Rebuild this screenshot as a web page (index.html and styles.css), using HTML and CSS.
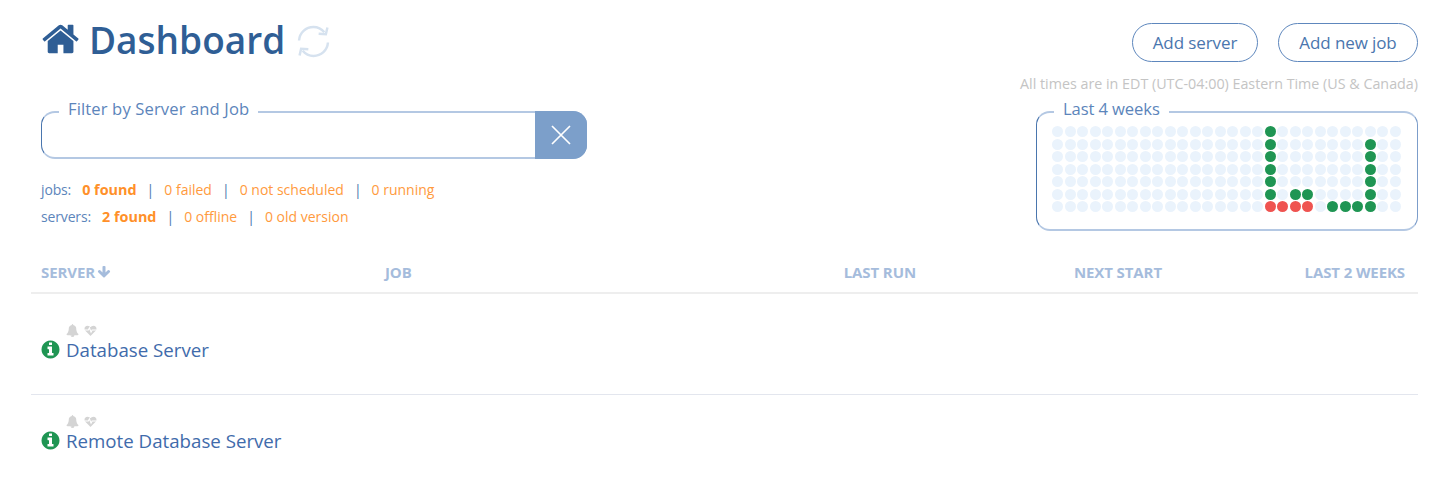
FILE: index.html
```html
<!DOCTYPE html>
<html lang="en">
<head>
<meta charset="utf-8">
<title>Dashboard</title>
<link rel="stylesheet" href="styles.css">
</head>
<body>
<main class="page">
  <header class="top">
    <h1 class="title">
      <svg class="home" viewBox="0 0 1792 1792"><path d="M1408 992v480q0 26-19 45t-45 19h-384v-384h-256v384h-384q-26 0-45-19t-19-45v-480q0-1 .5-3t.5-3l575-474 575 474q1 2 1 6zm223-69l-62 74q-8 9-21 11h-3q-13 0-21-7l-692-577-692 577q-12 8-24 7-13-2-21-11l-62-74q-8-10-7-23.5t11-21.5l719-599q32-26 76-26t76 26l244 204v-195q0-14 9-23t23-9h192q14 0 23 9t9 23v408l219 182q10 8 11 21.5t-7 23.5z"/></svg>
      <span>Dashboard</span>
      <svg class="sync" viewBox="0 0 32 32"><path d="M2 15C2.500 7.500 8.500 2 16 2c4.500 0 8 2 10.500 5M30 17c-.5 7.500-6.500 13-14 13-4.500 0-8-2-10.500-5"/><path d="M29.500 2.500L28 9l-7-.5M2.500 29.500L4 23l7 .5"/></svg>
    </h1>
    <div class="top-right">
      <div class="actions">
        <a class="pill" href="#">Add server</a>
        <a class="pill" href="#">Add new job</a>
      </div>
      <p class="tz">All times are in EDT (UTC-04:00) Eastern Time (US &amp; Canada)</p>
    </div>
  </header>

  <section class="controls">
    <div class="left-controls">
      <div class="panel filter">
        <span class="panel-label">Filter by Server and Job</span>
        <input class="filter-input" type="text" aria-label="Filter by Server and Job">
        <button class="clear" type="button" aria-label="Clear">
          <svg viewBox="0 0 20 20"><path d="M1 1l18 18M19 1L1 19"/></svg>
        </button>
      </div>
      <ul class="stats">
        <li class="stat-line"><span class="stat-name">jobs:</span><b>0 found</b><i>|</i><span>0 failed</span><i>|</i><span>0 not scheduled</span><i>|</i><span>0 running</span></li>
        <li class="stat-line"><span class="stat-name">servers:</span><b>2 found</b><i>|</i><span>0 offline</span><i>|</i><span>0 old version</span></li>
      </ul>
    </div>
    <div class="panel weeks">
      <span class="panel-label">Last 4 weeks</span>
      <div class="dots"><i></i><i></i><i></i><i></i><i></i><i></i><i></i><i></i><i></i><i></i><i></i><i></i><i></i><i></i><i></i><i></i><i></i><i class="g"></i><i></i><i></i><i></i><i></i><i></i><i></i><i></i><i></i><i></i><i></i><i></i><i></i><i></i><i></i><i></i><i></i><i></i><i></i><i></i><i></i><i></i><i></i><i></i><i></i><i></i><i></i><i></i><i class="g"></i><i></i><i></i><i></i><i></i><i></i><i></i><i></i><i class="g"></i><i></i><i></i><i></i><i></i><i></i><i></i><i></i><i></i><i></i><i></i><i></i><i></i><i></i><i></i><i></i><i></i><i></i><i></i><i></i><i class="g"></i><i></i><i></i><i></i><i></i><i></i><i></i><i></i><i class="g"></i><i></i><i></i><i></i><i></i><i></i><i></i><i></i><i></i><i></i><i></i><i></i><i></i><i></i><i></i><i></i><i></i><i></i><i></i><i></i><i class="g"></i><i></i><i></i><i></i><i></i><i></i><i></i><i></i><i class="g"></i><i></i><i></i><i></i><i></i><i></i><i></i><i></i><i></i><i></i><i></i><i></i><i></i><i></i><i></i><i></i><i></i><i></i><i></i><i></i><i class="g"></i><i></i><i></i><i></i><i></i><i></i><i></i><i></i><i class="g"></i><i></i><i></i><i></i><i></i><i></i><i></i><i></i><i></i><i></i><i></i><i></i><i></i><i></i><i></i><i></i><i></i><i></i><i></i><i></i><i class="g"></i><i></i><i class="g"></i><i class="g"></i><i></i><i></i><i></i><i></i><i class="g"></i><i></i><i></i><i></i><i></i><i></i><i></i><i></i><i></i><i></i><i></i><i></i><i></i><i></i><i></i><i></i><i></i><i></i><i></i><i></i><i class="r"></i><i class="r"></i><i class="r"></i><i class="r"></i><i></i><i class="g"></i><i class="g"></i><i class="g"></i><i class="g"></i><i></i><i></i></div>
    </div>
  </section>

  <section class="table">
    <div class="thead">
      <span class="th">SERVER <svg class="arrow" viewBox="0 0 1792 1792"><path d="M1675 832q0 53-37 90l-651 652q-39 37-91 37-53 0-90-37l-651-652q-38-36-38-90 0-53 38-91l74-75q39-37 91-37 53 0 90 37l294 294v-704q0-52 38-90t90-38h128q52 0 90 38t38 90v704l294-294q37-37 90-37 52 0 91 37l75 75q37 39 37 91z"/></svg></span>
      <span class="th">JOB</span>
      <span class="th th-end">LAST RUN</span>
      <span class="th th-end">NEXT START</span>
      <span class="th th-end">LAST 2 WEEKS</span>
    </div>
    <article class="row row-first">
      <div class="row-icons">
        <svg viewBox="0 0 1792 1792"><path d="M912 1696q0-16-16-16-59 0-101.500-42.500t-42.500-101.500q0-16-16-16t-16 16q0 73 51.500 124.500t124.500 51.500q16 0 16-16zm816-288q0 52-38 90t-90 38h-448q0 106-75 181t-181 75-181-75-75-181h-448q-52 0-90-38t-38-90q50-42 91-88t85-119.500 74.500-158.500 50-206 19.500-260q0-152 117-282.500t307-158.500q-8-19-8-39 0-40 28-68t68-28 68 28 28 68q0 20-8 39 190 28 307 158.500t117 282.500q0 139 19.500 260t50 206 74.500 158.500 85 119.500 91 88z"/></svg>
        <svg viewBox="0 0 24 24"><path d="M12 22L2.500 12.500C-.5 9 1 3 6.500 3 9 3 11 4.500 12 6c1-1.500 3-3 5.500-3C23 3 24.500 9 21.500 12.500z"/><path class="pulse" d="M1 11h7l2-4 3 8 2-4h8"/></svg>
      </div>
      <div class="server">
        <svg class="info" viewBox="0 0 1792 1792"><path d="M1152 1376v-160q0-14-9-23t-23-9h-96v-512q0-14-9-23t-23-9h-320q-14 0-23 9t-9 23v160q0 14 9 23t23 9h96v320h-96q-14 0-23 9t-9 23v160q0 14 9 23t23 9h448q14 0 23-9t9-23zm-128-896v-160q0-14-9-23t-23-9h-192q-14 0-23 9t-9 23v160q0 14 9 23t23 9h192q14 0 23-9t9-23zm640 416q0 209-103 385.500t-279.500 279.500-385.500 103-385.500-103-279.500-279.500-103-385.500 103-385.500 279.500-279.500 385.500-103 385.500 103 279.500 279.500 103 385.500z"/></svg>
        <a class="server-name" href="#">Database Server</a>
      </div>
    </article>
    <article class="row">
      <div class="row-icons">
        <svg viewBox="0 0 1792 1792"><path d="M912 1696q0-16-16-16-59 0-101.500-42.500t-42.500-101.500q0-16-16-16t-16 16q0 73 51.500 124.500t124.500 51.500q16 0 16-16zm816-288q0 52-38 90t-90 38h-448q0 106-75 181t-181 75-181-75-75-181h-448q-52 0-90-38t-38-90q50-42 91-88t85-119.500 74.500-158.500 50-206 19.500-260q0-152 117-282.500t307-158.500q-8-19-8-39 0-40 28-68t68-28 68 28 28 68q0 20-8 39 190 28 307 158.500t117 282.500q0 139 19.500 260t50 206 74.500 158.500 85 119.500 91 88z"/></svg>
        <svg viewBox="0 0 24 24"><path d="M12 22L2.500 12.500C-.5 9 1 3 6.500 3 9 3 11 4.500 12 6c1-1.500 3-3 5.500-3C23 3 24.500 9 21.500 12.500z"/><path class="pulse" d="M1 11h7l2-4 3 8 2-4h8"/></svg>
      </div>
      <div class="server">
        <svg class="info" viewBox="0 0 1792 1792"><path d="M1152 1376v-160q0-14-9-23t-23-9h-96v-512q0-14-9-23t-23-9h-320q-14 0-23 9t-9 23v160q0 14 9 23t23 9h96v320h-96q-14 0-23 9t-9 23v160q0 14 9 23t23 9h448q14 0 23-9t9-23zm-128-896v-160q0-14-9-23t-23-9h-192q-14 0-23 9t-9 23v160q0 14 9 23t23 9h192q14 0 23-9t9-23zm640 416q0 209-103 385.500t-279.500 279.500-385.500 103-385.500-103-279.500-279.500-103-385.500 103-385.500 279.500-279.500 385.500-103 385.500 103 279.500 279.500 103 385.500z"/></svg>
        <a class="server-name" href="#">Remote Database Server</a>
      </div>
    </article>
  </section>
</main>
</body>
</html>
```
FILE: styles.css
```css
* { box-sizing: border-box; }
html, body { margin: 0; padding: 0; background: #fff; }
body {
  font-family: "Open Sans", "Noto Sans", "Liberation Sans", sans-serif;
  color: #4a76ae;
  overflow: hidden;
}
.page { padding: 0 23px 0 31px; height: 479px; overflow: hidden; }

.top { display: flex; justify-content: space-between; align-items: flex-start; padding: 22px 0 0 10px; height: 98px; }
.title { margin: 0; display: flex; align-items: center; height: 36px; font-size: 37px; line-height: 36px; font-weight: 600; color: #2f5e95; }
.home { width: 40px; height: 40px; fill: #2f5e95; margin: -2px 7px 0 1px; }
.sync { width: 33px; height: 33px; margin: 3px 0 0 12px; fill: none; stroke: #d6e2ef; stroke-width: 2.400; }

.top-right { display: flex; flex-direction: column; align-items: flex-end; }
.actions { display: flex; gap: 20px; margin-top: 1px; }
.pill { display: flex; align-items: center; justify-content: center; height: 39px; border: 1px solid #5e87bd; border-radius: 20px; font-size: 17px; letter-spacing: -0.1px; color: #4a76ae; text-decoration: none; }
.pill:first-child { width: 126px; }
.pill:last-child { width: 140px; }
.tz { margin: 12px 0 0; font-size: 14.300px; line-height: 20px; color: #c4c4c4; white-space: nowrap; }

.controls { display: flex; justify-content: space-between; align-items: flex-start; padding: 13px 0 0 10px; height: 154px; }
.left-controls { width: 546px; }
.panel { position: relative; border: 2px solid #b4c8e3; border-left: 1px solid #4a76ae; border-right: 1px solid #7c9dca; border-radius: 14px; }
.panel-label { position: absolute; top: -15px; left: 17px; padding: 0 9px; background: #fff; font-size: 16.600px; line-height: 22px; color: #5c85bb; white-space: nowrap; }
.filter { display: flex; height: 48px; }
.filter .panel-label { letter-spacing: 0.12px; }
.weeks .panel-label { letter-spacing: -0.1px; }
.filter-input { flex: 1; min-width: 0; border: 0; background: transparent; outline: 0; border-radius: 14px 0 0 14px; }
.clear { width: 52px; margin: -2px -1px -2px 0; border: 0; padding: 0; background: #7c9fca; border-radius: 0 14px 14px 0; display: flex; align-items: center; justify-content: center; }
.clear svg { width: 20px; height: 20px; fill: none; stroke: #fff; stroke-width: 1.700; }

.stats { list-style: none; margin: 17px 0 0; padding: 0; font-size: 14px; }
.stat-line { display: flex; height: 27px; line-height: 27px; color: #ff9a3d; white-space: nowrap; }
.stat-name { color: #5c85bb; margin-right: 11px; letter-spacing: -0.15px; }
.stat-line b { font-weight: 700; font-size: 14.400px; color: #ff9029; }
.stat-line i { font-style: normal; color: #4a76ae; margin: 0 10px; }

.weeks { width: 382px; height: 120px; }
.dots { display: grid; grid-template-columns: repeat(28, 12.500px); grid-auto-rows: 12.500px; padding: 13px 0 0 15px; }
.dots i { width: 11px; height: 11px; border-radius: 50%; background: #eaf3fc; }
.dots .g { background: #1f9553; }
.dots .r { background: #ef5350; }

.table { width: 100%; }
.thead { display: grid; grid-template-columns: 344px 1fr 90px 246px 243px; height: 42px; align-items: center; padding: 0 13px 0 10px; border-bottom: 2px solid #eeeeee; }
.th { font-size: 15px; font-weight: 700; letter-spacing: -0.1px; color: #a5bcdc; display: flex; align-items: center; gap: 2px; white-space: nowrap; }
.th-end { justify-content: flex-end; }
.arrow { width: 14px; height: 14px; fill: #a5bcdc; }
.row { padding: 20px 0 0 10px; height: 101px; border-bottom: 1px solid #e3e6ee; }
.row:last-child { border-bottom: 0; }
.row-first { padding-top: 30px; }
.row-icons { display: flex; gap: 5px; height: 13px; padding-left: 25px; align-items: center; }
.row-icons svg { width: 13px; height: 13px; fill: #d4d4d4; }
.row-icons .pulse { fill: none; stroke: #fff; stroke-width: 2; }
.server { display: flex; align-items: center; height: 25px; }
.info { width: 21px; height: 21px; fill: #1f9553; margin: 0 5px 0 -1px; }
.server-name { font-size: 18.700px; color: #3f6bab; text-decoration: none; }
```
